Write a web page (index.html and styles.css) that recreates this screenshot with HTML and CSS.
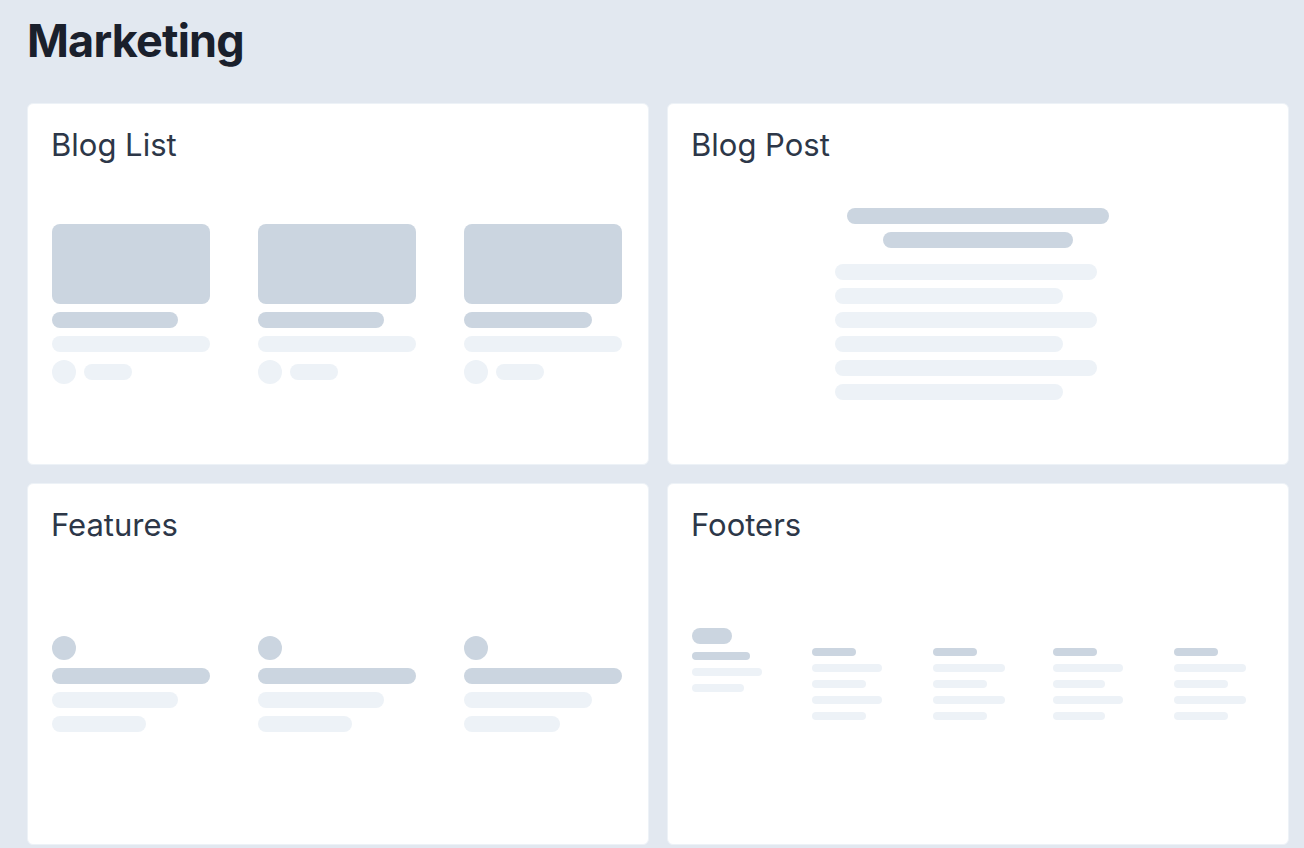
FILE: index.html
```html
<!DOCTYPE html>
<html lang="en">
<head>
    <meta charset="UTF-8">
    <meta name="viewport" content="width=device-width, initial-scale=1.0">
    <title>Marketing</title>
    <link rel="stylesheet" href="styles.css">
</head>
<body>
    <div class="pagina">
        <h1 class="titulo">Marketing</h1>

        <div class="grade">
            <!-- Blog List -->
            <div class="cartao">
                <h2 class="cartao-titulo">Blog List</h2>
                <div class="cartao-corpo">
                    <div class="tres-colunas">
                        <div class="post">
                            <div class="imagem"></div>
                            <div class="barra escura w126"></div>
                            <div class="barra clara w158"></div>
                            <div class="autor">
                                <span class="bola clara"></span>
                                <span class="barra clara w48"></span>
                            </div>
                        </div>
                        <div class="post">
                            <div class="imagem"></div>
                            <div class="barra escura w126"></div>
                            <div class="barra clara w158"></div>
                            <div class="autor">
                                <span class="bola clara"></span>
                                <span class="barra clara w48"></span>
                            </div>
                        </div>
                        <div class="post">
                            <div class="imagem"></div>
                            <div class="barra escura w128"></div>
                            <div class="barra clara w158"></div>
                            <div class="autor">
                                <span class="bola clara"></span>
                                <span class="barra clara w48"></span>
                            </div>
                        </div>
                    </div>
                </div>
            </div>

            <!-- Blog Post -->
            <div class="cartao">
                <h2 class="cartao-titulo">Blog Post</h2>
                <div class="cartao-corpo">
                    <div class="artigo">
                        <div class="barra escura w262 centro"></div>
                        <div class="barra escura w190 centro"></div>
                        <div class="texto">
                            <div class="barra clara w262"></div>
                            <div class="barra clara w228"></div>
                            <div class="barra clara w262"></div>
                            <div class="barra clara w228"></div>
                            <div class="barra clara w262"></div>
                            <div class="barra clara w228"></div>
                        </div>
                    </div>
                </div>
            </div>

            <!-- Features -->
            <div class="cartao">
                <h2 class="cartao-titulo">Features</h2>
                <div class="cartao-corpo">
                    <div class="tres-colunas">
                        <div class="recurso">
                            <span class="bola escura"></span>
                            <div class="barra escura w158"></div>
                            <div class="barra clara w126"></div>
                            <div class="barra clara w94"></div>
                        </div>
                        <div class="recurso">
                            <span class="bola escura"></span>
                            <div class="barra escura w158"></div>
                            <div class="barra clara w126"></div>
                            <div class="barra clara w94"></div>
                        </div>
                        <div class="recurso">
                            <span class="bola escura"></span>
                            <div class="barra escura w158"></div>
                            <div class="barra clara w128"></div>
                            <div class="barra clara w96"></div>
                        </div>
                    </div>
                </div>
            </div>

            <!-- Footers -->
            <div class="cartao">
                <h2 class="cartao-titulo">Footers</h2>
                <div class="cartao-corpo">
                    <div class="rodape">
                        <div class="rodape-marca">
                            <div class="logo"></div>
                            <div class="fina escura w58"></div>
                            <div class="fina clara w70"></div>
                            <div class="fina clara w52"></div>
                        </div>
                        <div class="rodape-coluna">
                            <div class="fina escura w44"></div>
                            <div class="fina clara w70"></div>
                            <div class="fina clara w54"></div>
                            <div class="fina clara w70"></div>
                            <div class="fina clara w54"></div>
                        </div>
                        <div class="rodape-coluna">
                            <div class="fina escura w44"></div>
                            <div class="fina clara w72"></div>
                            <div class="fina clara w54"></div>
                            <div class="fina clara w72"></div>
                            <div class="fina clara w54"></div>
                        </div>
                        <div class="rodape-coluna">
                            <div class="fina escura w44"></div>
                            <div class="fina clara w70"></div>
                            <div class="fina clara w52"></div>
                            <div class="fina clara w70"></div>
                            <div class="fina clara w52"></div>
                        </div>
                        <div class="rodape-coluna">
                            <div class="fina escura w44"></div>
                            <div class="fina clara w72"></div>
                            <div class="fina clara w54"></div>
                            <div class="fina clara w72"></div>
                            <div class="fina clara w54"></div>
                        </div>
                    </div>
                </div>
            </div>
        </div>
    </div>
</body>
</html>
```

FILE: styles.css
```css
* {
    margin: 0;
    padding: 0;
    box-sizing: border-box;
}

body {
    font-family: Inter, "Noto Sans", sans-serif;
    background-color: #e2e8f0;
    color: #2d3748;
}

.pagina {
    width: 1289px;
    padding-left: 27px;
    padding-top: 14px;
}

.titulo {
    font-size: 45px;
    line-height: 54px;
    font-weight: 700;
    color: #1a202c;
    letter-spacing: -0.8px;
    margin-bottom: 35px;
}

.grade {
    display: grid;
    grid-template-columns: 622px 622px;
    gap: 18px;
}

.cartao {
    height: 362px;
    background-color: #fff;
    border: 1px solid #edf2f7;
    border-radius: 6px;
    padding: 24px;
    display: flex;
    flex-direction: column;
}

.cartao-titulo {
    font-size: 31px;
    line-height: 34px;
    font-weight: 400;
    color: #2d3748;
    margin-left: -1px;
}

.cartao-corpo {
    flex: 1;
    display: flex;
    flex-direction: column;
    justify-content: center;
    padding-top: 6px;
}

/* peças de esqueleto */
.barra {
    display: block;
    height: 16px;
    border-radius: 8px;
}

.fina {
    height: 8px;
    border-radius: 4px;
}

.escura {
    background-color: #cbd5e0;
}

.clara {
    background-color: #edf2f7;
}

.bola {
    display: block;
    width: 24px;
    height: 24px;
    border-radius: 50%;
}

.w44 { width: 44px; }
.w48 { width: 48px; }
.w52 { width: 52px; }
.w54 { width: 54px; }
.w58 { width: 58px; }
.w70 { width: 70px; }
.w72 { width: 72px; }
.w94 { width: 94px; }
.w96 { width: 96px; }
.w126 { width: 126px; }
.w128 { width: 128px; }
.w158 { width: 158px; }
.w190 { width: 190px; }
.w228 { width: 228px; }
.w262 { width: 262px; }

/* Blog List / Features */
.tres-colunas {
    display: grid;
    grid-template-columns: repeat(3, 158px);
    gap: 48px;
}

.post,
.recurso {
    display: flex;
    flex-direction: column;
    gap: 8px;
}

.imagem {
    height: 80px;
    background-color: #cbd5e0;
    border-radius: 8px;
}

.autor {
    display: flex;
    align-items: center;
    gap: 8px;
}

/* Blog Post */
.artigo {
    width: 286px;
    margin: 0 auto;
    display: flex;
    flex-direction: column;
    gap: 8px;
}

.centro {
    margin: 0 auto;
}

.texto {
    display: flex;
    flex-direction: column;
    gap: 8px;
    margin-top: 8px;
}

/* Footers */
.rodape {
    display: grid;
    grid-template-columns: repeat(5, 1fr);
    gap: 30px;
    padding-bottom: 20px;
}

.rodape-marca,
.rodape-coluna {
    display: flex;
    flex-direction: column;
    gap: 8px;
}

.rodape-coluna {
    padding-top: 20px;
}

.logo {
    width: 40px;
    height: 16px;
    border-radius: 8px;
    background-color: #cbd5e0;
}
```
